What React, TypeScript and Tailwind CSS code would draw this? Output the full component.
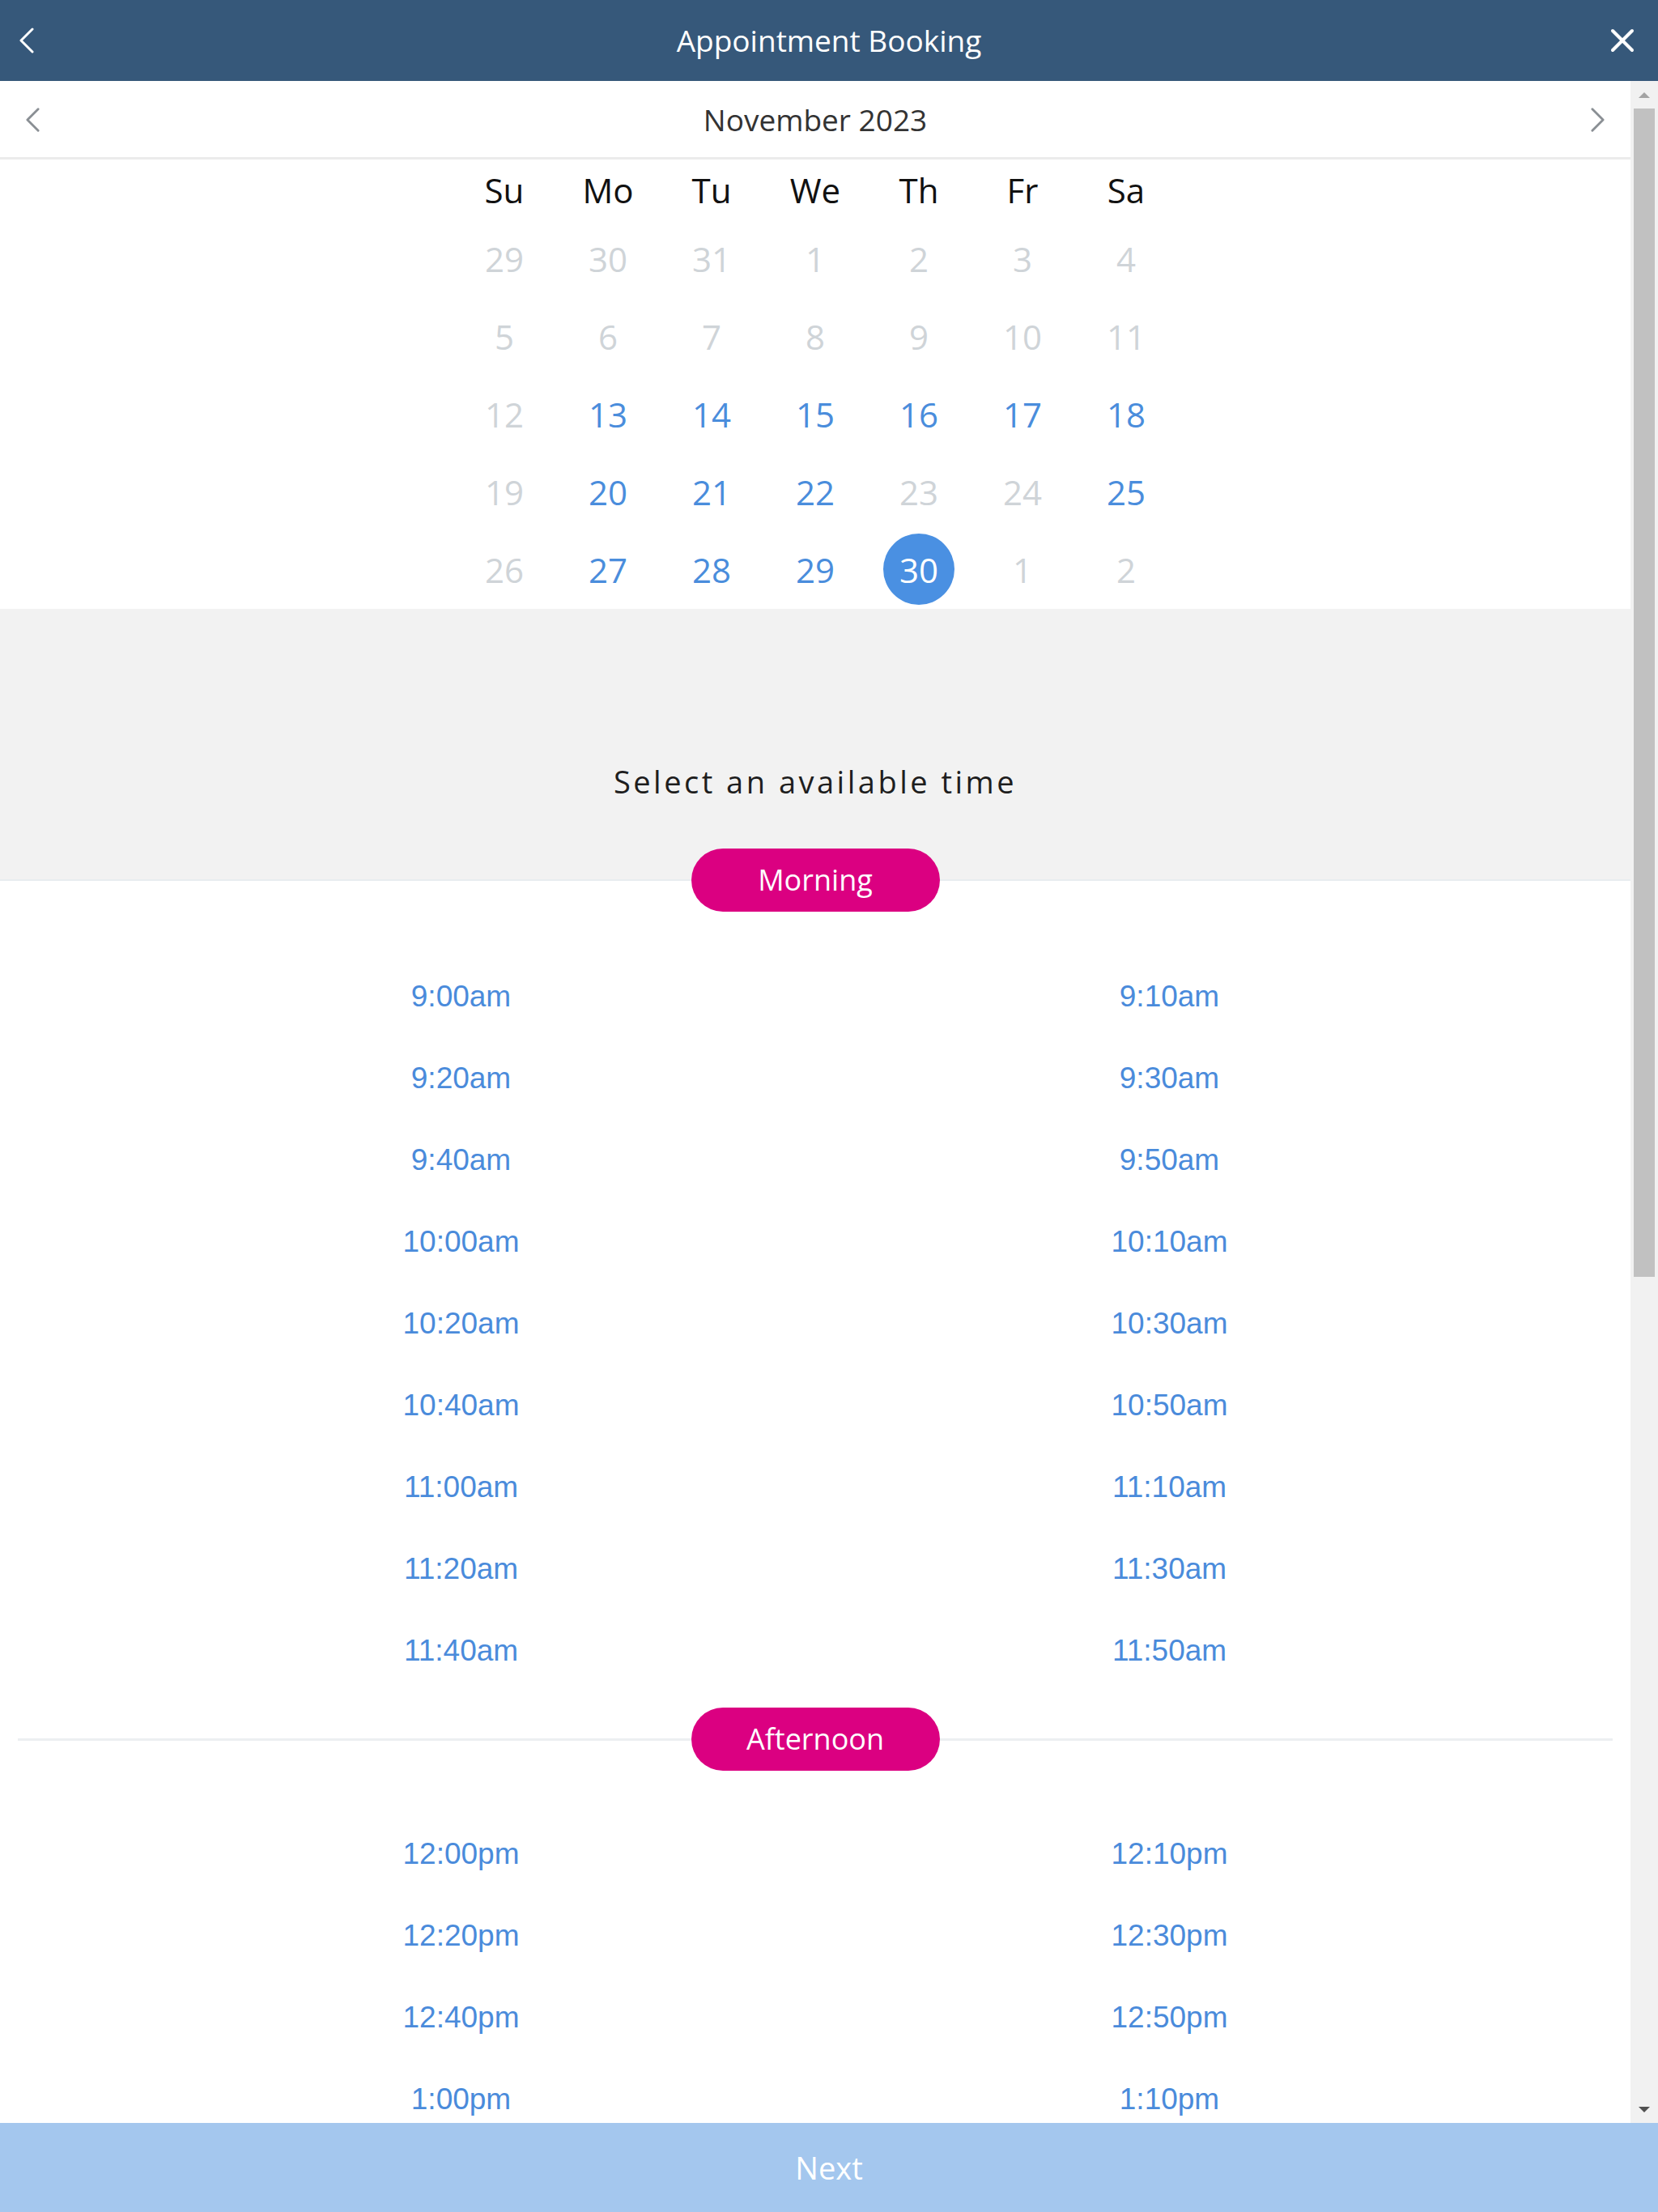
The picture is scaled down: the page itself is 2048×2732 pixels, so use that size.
const weekDays = ["Su", "Mo", "Tu", "We", "Th", "Fr", "Sa"];

// each cell: [label, state]  muted = outside month or unavailable
type DayState = "muted" | "open" | "selected";
const weeks: [string, DayState][][] = [
  [["29", "muted"], ["30", "muted"], ["31", "muted"], ["1", "muted"], ["2", "muted"], ["3", "muted"], ["4", "muted"]],
  [["5", "muted"], ["6", "muted"], ["7", "muted"], ["8", "muted"], ["9", "muted"], ["10", "muted"], ["11", "muted"]],
  [["12", "muted"], ["13", "open"], ["14", "open"], ["15", "open"], ["16", "open"], ["17", "open"], ["18", "open"]],
  [["19", "muted"], ["20", "open"], ["21", "open"], ["22", "open"], ["23", "muted"], ["24", "muted"], ["25", "open"]],
  [["26", "muted"], ["27", "open"], ["28", "open"], ["29", "open"], ["30", "selected"], ["1", "muted"], ["2", "muted"]],
];

const morning = [
  "9:00am", "9:10am", "9:20am", "9:30am", "9:40am", "9:50am",
  "10:00am", "10:10am", "10:20am", "10:30am", "10:40am", "10:50am",
  "11:00am", "11:10am", "11:20am", "11:30am", "11:40am", "11:50am",
];

// only the slots that fit above the Next bar
const afternoon = ["12:00pm", "12:10pm", "12:20pm", "12:30pm", "12:40pm", "12:50pm", "1:00pm", "1:10pm"];

function Chevron({ dir, className }: { dir: "left" | "right"; className?: string }) {
  return (
    <svg viewBox="0 0 18 32" className={className} fill="none" stroke="currentColor" strokeWidth={3} strokeLinecap="round" strokeLinejoin="round">
      {dir === "left" ? <polyline points="16,2 2,16 16,30" /> : <polyline points="2,2 16,16 2,30" />}
    </svg>
  );
}

function Pill({ label }: { label: string }) {
  return (
    <div className="flex h-[78px] w-[307px] shrink-0 items-center justify-center rounded-full bg-[#db0081] text-[36px] text-white">
      {label}
    </div>
  );
}

function TimeGrid({ times }: { times: string[] }) {
  return (
    <div className="grid grid-cols-2 px-[132px] font-['Liberation_Sans',Arial,sans-serif] text-[37px] text-[#4a8bdb]">
      {times.map((t) => (
        <div key={t} className="flex h-[101px] items-center justify-center">
          {t}
        </div>
      ))}
    </div>
  );
}

export default function App() {
  return (
    <div className="flex h-[2732px] w-[2048px] flex-col overflow-hidden bg-white font-['Open_Sans',sans-serif]">
      {/* top bar */}
      <header className="flex h-[100px] shrink-0 items-center bg-[#36587a] text-white">
        <div className="flex w-[120px] items-center pl-[24px]">
          <Chevron dir="left" className="h-[32px] w-[18px]" />
        </div>
        <h1 className="flex-1 text-center text-[37px] font-normal">Appointment Booking</h1>
        <div className="flex w-[120px] justify-end pr-[29px]">
          <svg viewBox="0 0 30 30" className="size-[30px]" stroke="currentColor" strokeWidth={4} strokeLinecap="round">
            <line x1="3" y1="3" x2="27" y2="27" />
            <line x1="27" y1="3" x2="3" y2="27" />
          </svg>
        </div>
      </header>

      <div className="flex min-h-0 flex-1">
        <main className="flex min-w-0 flex-1 flex-col overflow-hidden">
          {/* month switcher */}
          <div className="flex h-[97px] shrink-0 items-center justify-between border-b-[3px] border-[#ebebeb] px-[32px] pt-[2px] text-[#8a8f94]">
            <Chevron dir="left" className="h-[32px] w-[17px]" />
            <span className="text-[37px] text-[#333]">November 2023</span>
            <Chevron dir="right" className="h-[32px] w-[17px]" />
          </div>

          {/* calendar */}
          <div className="shrink-0 pb-[1px]">
            <div className="mx-auto grid w-[896px] grid-cols-7 text-[42px]">
              {weekDays.map((d) => (
                <div key={d} className="flex h-[74px] items-center justify-center text-[#111]">
                  {d}
                </div>
              ))}
              {weeks.flat().map(([label, state], i) => (
                <div key={i} className="flex h-[96px] items-center justify-center">
                  {state === "selected" ? (
                    <span className="flex size-[88px] items-center justify-center rounded-full bg-[#4a90e2] text-white">
                      {label}
                    </span>
                  ) : (
                    <span className={state === "open" ? "text-[#4a8ddc]" : "text-[#cfd4d8]"}>{label}</span>
                  )}
                </div>
              ))}
            </div>
          </div>

          <div className="h-[296px] shrink-0 bg-[#f2f2f2] pt-[188px]">
            <p className="text-center text-[38px] leading-[50px] tracking-[3.5px] text-[#1e1e1e]">Select an available time</p>
          </div>

          {/* morning */}
          <div className="relative flex h-[78px] shrink-0 items-center justify-center bg-[linear-gradient(to_bottom,#f2f2f2_50%,#ffffff_50%)]">
            <div className="absolute inset-x-0 top-[38px] h-[2px] bg-[#e8edf0]" />
            <div className="relative">
              <Pill label="Morning" />
            </div>
          </div>
          <div className="shrink-0 pt-[54px]">
            <TimeGrid times={morning} />
          </div>

          {/* afternoon */}
          <div className="mt-[21px] flex h-[76px] shrink-0 items-center px-[22px]">
            <div className="h-[3px] flex-1 bg-[#eceff1]" />
            <Pill label="Afternoon" />
            <div className="h-[3px] flex-1 bg-[#eceff1]" />
          </div>
          <div className="shrink-0 pt-[53px]">
            <TimeGrid times={afternoon} />
          </div>
        </main>

        {/* scrollbar */}
        <div className="flex w-[34px] shrink-0 flex-col bg-[#f1f1f1]">
          <div className="flex h-[34px] items-center justify-center">
            <div className="h-0 w-0 border-x-[7px] border-b-[7px] border-x-transparent border-b-[#a3a3a3]" />
          </div>
          <div className="mx-[4px] h-[1443px] bg-[#c1c1c1]" />
          <div className="flex-1" />
          <div className="flex h-[34px] items-center justify-center">
            <div className="h-0 w-0 border-x-[7px] border-t-[7px] border-x-transparent border-t-[#505050]" />
          </div>
        </div>
      </div>

      <button className="flex h-[110px] shrink-0 items-center justify-center bg-[#a4c7ee] text-[38px] text-white">
        Next
      </button>
    </div>
  );
}
